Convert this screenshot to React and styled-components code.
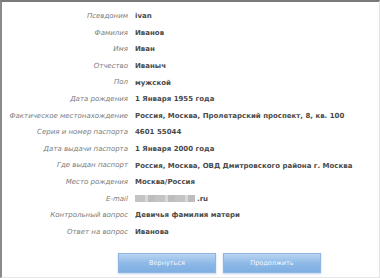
import styled, { createGlobalStyle } from "styled-components";

const GlobalStyle = createGlobalStyle`
  html, body {
    margin: 0;
    padding: 0;
    background: #fff;
  }
`;

const rows = [
  ["Псевдоним", "ivan"],
  ["Фамилия", "Иванов"],
  ["Имя", "Иван"],
  ["Отчество", "Иваныч"],
  ["Пол", "мужской"],
  ["Дата рождения", "1 Января 1955 года"],
  ["Фактическое местонахождение", "Россия, Москва, Пролетарский проспект, 8, кв. 100"],
  ["Серия и номер паспорта", "4601 55044"],
  ["Дата выдачи паспорта", "1 Января 2000 года"],
  ["Где выдан паспорт", "Россия, Москва, ОВД Дмитровского района г. Москва"],
  ["Место рождения", "Москва/Россия"],
  ["E-mail", null],
  ["Контрольный вопрос", "Девичья фамилия матери"],
  ["Ответ на вопрос", "Иванова"],
];

const App = () => {
  return (
    <>
      <GlobalStyle />
      <Panel>
        <Grid>
          {rows.map(([label, value]) => (
            <Row key={label}>
              <Label>{label}</Label>
              {value ? (
                <Value>{value}</Value>
              ) : (
                <Value>
                  <Hidden />
                  .ru
                </Value>
              )}
            </Row>
          ))}
        </Grid>
        <Buttons>
          <Button>Вернуться</Button>
          <Button>Продолжить</Button>
        </Buttons>
      </Panel>
    </>
  );
};

// Panel
const Panel = styled.div`
  box-sizing: border-box;
  width: 380px;
  height: 278px;
  border-top: 2px solid #7a7a7a;
  border-left: 2px solid #8a8a8a;
  border-right: 1px solid #e2e2e2;
  border-bottom: 1px solid #e6e6e6;
  padding-top: 6px;
  font-family: "DejaVu Sans", Verdana, sans-serif;
`;

// Grid of rows
const Grid = styled.div`
  display: grid;
  grid-template-columns: 126px 1fr;
  grid-auto-rows: 16.6px;
  column-gap: 7px;
`;

const Row = styled.div`
  display: contents;
`;

const Label = styled.div`
  text-align: right;
  font-style: italic;
  font-size: 7px;
  line-height: 16.6px;
  color: #7a7a7a;
  white-space: nowrap;
`;

const Value = styled.div`
  display: flex;
  align-items: center;
  font-weight: bold;
  font-size: 7px;
  color: #4a4a4a;
  white-space: nowrap;
`;

// blurred-out email
const Hidden = styled.span`
  display: inline-block;
  width: 60px;
  height: 7px;
  margin-right: 2px;
  background: repeating-linear-gradient(
    90deg,
    #c4c4c4 0 10px,
    #d8d8d8 10px 13px,
    #bdbdbd 13px 20px
  );
`;

// Buttons
const Buttons = styled.div`
  display: flex;
  gap: 7px;
  padding-left: 116px;
  margin-top: 13px;
`;

const Button = styled.button`
  box-sizing: border-box;
  width: 98px;
  height: 20px;
  border: 1px solid #8fb4e0;
  background: linear-gradient(#b9d4f2, #8cb8e6 55%, #7eaee2);
  color: #f4f8ff;
  font-family: "DejaVu Sans", Verdana, sans-serif;
  font-size: 6.5px;
  padding: 0;
  box-shadow: 0 1px 2px rgba(120, 170, 230, 0.5);
`;

export default App;
